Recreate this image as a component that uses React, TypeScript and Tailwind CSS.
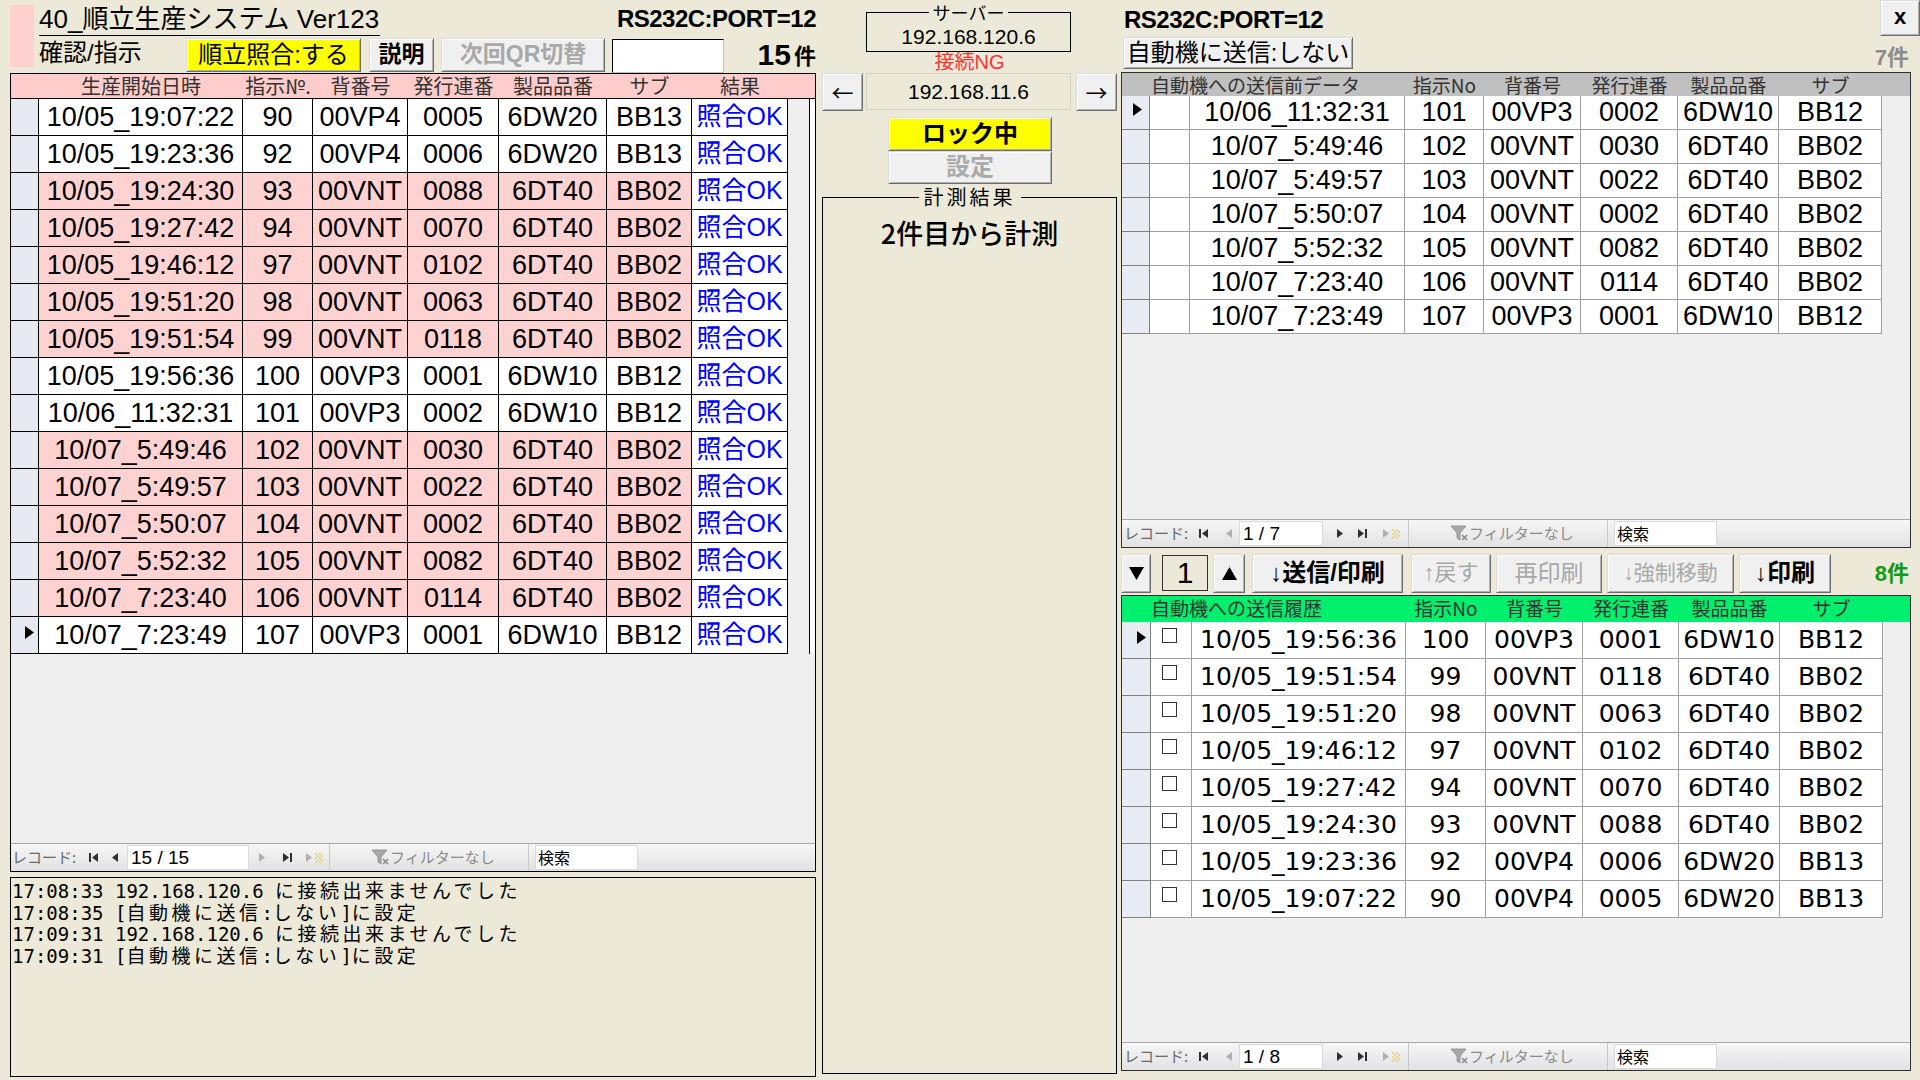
import React from "react";

const F = "font-['Liberation_Sans','Noto_Sans_CJK_JP',sans-serif]";
const FD = "font-['DejaVu_Sans','Noto_Sans_CJK_JP',sans-serif]";
const FM = "font-['DejaVu_Sans_Mono','Noto_Sans_CJK_JP',monospace]";
const FJ = "font-['Noto_Sans_CJK_JP',sans-serif]";

const BTN =
  "bg-[#f0f0f0] border border-t-[#dcdcdc] border-l-[#dcdcdc] border-r-[#6e6e6e] border-b-[#6e6e6e] shadow-[inset_1px_1px_0_#ffffff,inset_-1px_-1px_0_#b0b0b0]";

type R = [string, string, string, string, string, string];

const leftRows: { r: R; p: boolean }[] = [
  { r: ["10/05_19:07:22", "90", "00VP4", "0005", "6DW20", "BB13"], p: false },
  { r: ["10/05_19:23:36", "92", "00VP4", "0006", "6DW20", "BB13"], p: false },
  { r: ["10/05_19:24:30", "93", "00VNT", "0088", "6DT40", "BB02"], p: true },
  { r: ["10/05_19:27:42", "94", "00VNT", "0070", "6DT40", "BB02"], p: true },
  { r: ["10/05_19:46:12", "97", "00VNT", "0102", "6DT40", "BB02"], p: true },
  { r: ["10/05_19:51:20", "98", "00VNT", "0063", "6DT40", "BB02"], p: true },
  { r: ["10/05_19:51:54", "99", "00VNT", "0118", "6DT40", "BB02"], p: true },
  { r: ["10/05_19:56:36", "100", "00VP3", "0001", "6DW10", "BB12"], p: false },
  { r: ["10/06_11:32:31", "101", "00VP3", "0002", "6DW10", "BB12"], p: false },
  { r: ["10/07_5:49:46", "102", "00VNT", "0030", "6DT40", "BB02"], p: true },
  { r: ["10/07_5:49:57", "103", "00VNT", "0022", "6DT40", "BB02"], p: true },
  { r: ["10/07_5:50:07", "104", "00VNT", "0002", "6DT40", "BB02"], p: true },
  { r: ["10/07_5:52:32", "105", "00VNT", "0082", "6DT40", "BB02"], p: true },
  { r: ["10/07_7:23:40", "106", "00VNT", "0114", "6DT40", "BB02"], p: true },
  { r: ["10/07_7:23:49", "107", "00VP3", "0001", "6DW10", "BB12"], p: false },
];

const rightTop: R[] = [
  ["10/06_11:32:31", "101", "00VP3", "0002", "6DW10", "BB12"],
  ["10/07_5:49:46", "102", "00VNT", "0030", "6DT40", "BB02"],
  ["10/07_5:49:57", "103", "00VNT", "0022", "6DT40", "BB02"],
  ["10/07_5:50:07", "104", "00VNT", "0002", "6DT40", "BB02"],
  ["10/07_5:52:32", "105", "00VNT", "0082", "6DT40", "BB02"],
  ["10/07_7:23:40", "106", "00VNT", "0114", "6DT40", "BB02"],
  ["10/07_7:23:49", "107", "00VP3", "0001", "6DW10", "BB12"],
];

const rightBottom: R[] = [
  ["10/05_19:56:36", "100", "00VP3", "0001", "6DW10", "BB12"],
  ["10/05_19:51:54", "99", "00VNT", "0118", "6DT40", "BB02"],
  ["10/05_19:51:20", "98", "00VNT", "0063", "6DT40", "BB02"],
  ["10/05_19:46:12", "97", "00VNT", "0102", "6DT40", "BB02"],
  ["10/05_19:27:42", "94", "00VNT", "0070", "6DT40", "BB02"],
  ["10/05_19:24:30", "93", "00VNT", "0088", "6DT40", "BB02"],
  ["10/05_19:23:36", "92", "00VP4", "0006", "6DW20", "BB13"],
  ["10/05_19:07:22", "90", "00VP4", "0005", "6DW20", "BB13"],
];

const LW = ["w-[204px]", "w-[70px]", "w-[95px]", "w-[91px]", "w-[108px]", "w-[85px]", "w-[96px]"];
const TW = ["w-[215px]", "w-[79px]", "w-[97px]", "w-[97px]", "w-[101px]", "w-[103px]"];
const BW = ["w-[214px]", "w-[80px]", "w-[97px]", "w-[96px]", "w-[101px]", "w-[103px]"];

function Marker() {
  return (
    <svg width="9" height="13" viewBox="0 0 9 13">
      <polygon points="0,0 9,6.5 0,13" fill="#000" />
    </svg>
  );
}

function Ico({ k, c }: { k: "first" | "prev" | "next" | "last" | "new"; c: string }) {
  if (k === "first")
    return (
      <svg width="10" height="11" viewBox="0 0 10 11">
        <rect x="0" y="1" width="2" height="9" fill={c} />
        <polygon points="9,1 3,5.5 9,10" fill={c} />
      </svg>
    );
  if (k === "prev")
    return (
      <svg width="7" height="11" viewBox="0 0 7 11">
        <polygon points="6,1 0,5.5 6,10" fill={c} />
      </svg>
    );
  if (k === "next")
    return (
      <svg width="7" height="11" viewBox="0 0 7 11">
        <polygon points="1,1 7,5.5 1,10" fill={c} />
      </svg>
    );
  if (k === "last")
    return (
      <svg width="10" height="11" viewBox="0 0 10 11">
        <polygon points="0,1 6,5.5 0,10" fill={c} />
        <rect x="7" y="1" width="2" height="9" fill={c} />
      </svg>
    );
  return (
    <svg width="20" height="11" viewBox="0 0 20 11">
      <polygon points="1,1 7,5.5 1,10" fill={c} />
      <g fill="#e6d48a">
        <rect x="10" y="1" width="2" height="2" />
        <rect x="14" y="1" width="2" height="2" />
        <rect x="12" y="3" width="2" height="2" />
        <rect x="16" y="3" width="2" height="2" />
        <rect x="10" y="5" width="2" height="2" />
        <rect x="14" y="5" width="2" height="2" />
        <rect x="12" y="7" width="2" height="2" />
        <rect x="16" y="7" width="2" height="2" />
        <rect x="10" y="9" width="2" height="2" />
        <rect x="14" y="9" width="2" height="2" />
      </g>
    </svg>
  );
}

function Funnel() {
  return (
    <svg width="19" height="17" viewBox="0 0 19 17">
      <polygon points="1,1 16,1 10,8 10,15 7,13 7,8" fill="#a8a8a8" stroke="#8a8a8a" strokeWidth="0.8" />
      <path d="M12 10 L17 15 M17 10 L12 15" stroke="#8a8a8a" strokeWidth="1.6" />
    </svg>
  );
}

function NavBar({ value, right }: { value: string; right?: boolean }) {
  const act = "#303030";
  const dis = "#b0b0b0";
  return (
    <div className="h-[28px] shrink-0 border-t border-[#a8a8a8] bg-linear-to-b from-[#f6f6f6] to-[#e2e2e2] flex items-center text-[15px] text-[#6a6a6a] whitespace-nowrap">
      <div className={`${right ? "w-[66px] pl-[2px]" : "w-[67px] pl-[1px]"} shrink-0 overflow-visible ${FJ}`}>レコード:</div>
      <div className="ml-[11px] flex items-center shrink-0">
        <Ico k="first" c={act} />
      </div>
      <div className={`${right ? "ml-[17px]" : "ml-[13px]"} flex items-center shrink-0`}>
        <Ico k="prev" c={right ? dis : act} />
      </div>
      <div
        className={`${right ? "ml-[6px] w-[84px]" : "ml-[8px] w-[122px]"} shrink-0 h-[25px] bg-white border border-[#dadada] text-[19px] leading-[24px] text-black pl-[3px] ${F}`}
      >
        {value}
      </div>
      <div className={`${right ? "ml-[13px]" : "ml-[9px]"} flex items-center shrink-0`}>
        <Ico k="next" c={right ? act : dis} />
      </div>
      <div className={`${right ? "ml-[15px]" : "ml-[18px]"} flex items-center shrink-0`}>
        <Ico k="last" c={act} />
      </div>
      <div className={`${right ? "ml-[14px]" : "ml-[12px]"} flex items-center shrink-0`}>
        <Ico k="new" c={dis} />
      </div>
      <div className={`${right ? "ml-[6px]" : "ml-[4px]"} w-px h-[27px] bg-[#c8c8c8] shrink-0`} />
      <div className="ml-[41px] flex items-center shrink-0">
        <Funnel />
      </div>
      <div className={`w-[100px] shrink-0 text-[15px] text-[#8a8a8a] ${FJ}`}>フィルターなし</div>
      <div className="ml-[38px] w-px h-[27px] bg-[#c8c8c8] shrink-0" />
      <div className={`ml-[6px] w-[103px] shrink-0 h-[25px] bg-white border border-[#dadada] text-[16px] leading-[23px] text-black pl-[2px] ${FJ}`}>
        検索
      </div>
    </div>
  );
}

function LeftTable() {
  const heads = ["生産開始日時", "指示№.", "背番号", "発行連番", "製品品番", "サブ", "結果"];
  return (
    <div className="h-[799px] border border-black flex flex-col bg-[#efefef]">
      <div className={`h-[24px] shrink-0 flex bg-[#ffcccc] text-[20px] leading-[24px] text-[#333] ${FJ}`}>
        <div className="w-[28px]" />
        {heads.map((h, i) => (
          <div key={i} className={`${LW[i]} text-center`}>
            {h}
          </div>
        ))}
      </div>
      <div className="flex border-t border-black">
        <div className="flex flex-col">
          {leftRows.map((row, ri) => (
            <div key={ri} className="h-[37px] flex border-b border-black text-[27px]">
              <div className="w-[28px] h-full bg-[#e6e9ef] border-r border-black pl-[14px] pt-[9px]">
                {ri === 14 && <Marker />}
              </div>
              {row.r.map((c, ci) => (
                <div
                  key={ci}
                  className={`${LW[ci]} h-full border-r border-black flex items-center justify-center whitespace-nowrap ${
                    row.p ? "bg-[#ffd2d2]" : "bg-white"
                  }`}
                >
                  {c}
                </div>
              ))}
              <div className={`${LW[6]} h-full border-r border-black bg-white flex items-center justify-center text-[25px] text-[#0000ff]`}>
                照合OK
              </div>
            </div>
          ))}
        </div>
        <div className="flex-1" />
        <div className="w-[6px] h-[555px] bg-white border-l border-black" />
      </div>
      <div className="mt-auto">
        <NavBar value="15 / 15" />
      </div>
    </div>
  );
}

function LogLine({ t, parts }: { t: string; parts: [string, boolean][] }) {
  return (
    <div className={`h-[21.7px] leading-[21.7px] whitespace-pre text-[19px] ${FM}`}>
      {t}
      {parts.map(([s, jp], i) =>
        jp ? (
          <span key={i} className="tracking-[3.5px]">
            {s}
          </span>
        ) : (
          <span key={i}>{s}</span>
        )
      )}
    </div>
  );
}

function Left() {
  return (
    <div className="w-[806px] h-full flex flex-col">
      <div className="h-[73px] flex shrink-0">
        <div className="w-[24px] h-[62px] mt-[5px] bg-[#ffd0d0]" />
        <div className="ml-[5px] flex-1 flex flex-col">
          <div className="h-[37px] flex items-start justify-between">
            <div className="mt-[4px] text-[26px] leading-[31px] border-b border-black pr-[1px]">
              40_順立生産システム Ver123
            </div>
            <div className="mt-[6px] text-[24px] leading-[26px] font-bold tracking-[-0.5px]">RS232C:PORT=12</div>
          </div>
          <div className="h-[36px] flex items-start">
            <div className="w-[147px] text-[24px] leading-[30px] mt-[1px]">確認/指示</div>
            <div className={`${BTN} bg-[#ffff00] w-[175px] h-[34px] mt-[1px] text-[24px] leading-[31px] text-center`}>
              順立照合:する
            </div>
            <div className={`${BTN} ml-[8px] w-[65px] h-[34px] mt-[1px] text-[23px] leading-[31px] text-center font-bold`}>
              説明
            </div>
            <div className={`${BTN} ml-[7px] w-[164px] h-[34px] mt-[1px] text-[23px] leading-[31px] text-center font-bold text-[#a8a8a8]`}>
              次回QR切替
            </div>
            <div className="ml-[7px] w-[112px] h-[34px] mt-[2px] bg-white border border-black border-r-[#c0c0c0] border-b-[#c0c0c0]" />
            <div className="flex-1 flex justify-end items-end h-[34px] font-bold">
              <span className="text-[30px] leading-[32px]">15</span>
              <span className="text-[22px] leading-[28px] ml-[3px]">件</span>
            </div>
          </div>
        </div>
      </div>
      <LeftTable />
      <div className="mt-[5px] h-[200px] border border-black bg-[#ece9d8] pl-[1px] pt-[3px]">
        <LogLine t="17:08:33 192.168.120.6 " parts={[["に接続出来ませんでした", true]]} />
        <LogLine
          t="17:08:35 ["
          parts={[
            ["自動機に送信", true],
            [":", false],
            ["しない", true],
            ["]", false],
            ["に設定", true],
          ]}
        />
        <LogLine t="17:09:31 192.168.120.6 " parts={[["に接続出来ませんでした", true]]} />
        <LogLine
          t="17:09:31 ["
          parts={[
            ["自動機に送信", true],
            [":", false],
            ["しない", true],
            ["]", false],
            ["に設定", true],
          ]}
        />
      </div>
    </div>
  );
}

function Middle() {
  return (
    <div className="ml-[6px] w-[295px] h-full flex flex-col">
      <div className="relative mt-[12px] ml-[44px] w-[205px] h-[40px] border border-black">
        <div className={`absolute left-1/2 -translate-x-1/2 -top-[10px] bg-[#ece9d8] px-[4px] text-[18px] leading-[18px] whitespace-nowrap ${FJ}`}>
          サーバー
        </div>
        <div className="text-center text-[21px] leading-[24px] pt-[12px]">192.168.120.6</div>
      </div>
      <div className="h-[21px] text-center text-[20px] leading-[21px] text-[#ff3333]">接続NG</div>
      <div className="h-[38px] flex">
        <div className={`${BTN} w-[41px] h-full text-[22px] leading-[34px] text-center ${FJ}`}>←</div>
        <div className="ml-[3px] w-[205px] h-[37px] border border-[#d6d2c0] text-center text-[21px] leading-[35px]">
          192.168.11.6
        </div>
        <div className={`${BTN} ml-[5px] w-[41px] h-full text-[22px] leading-[34px] text-center ${FJ}`}>→</div>
      </div>
      <div className={`${BTN} mt-[6px] ml-[66px] w-[164px] h-[34px] bg-[#ffff00] text-[24px] leading-[31px] text-center font-bold`}>
        ロック中
      </div>
      <div className={`${BTN} ml-[66px] w-[164px] h-[33px] text-[24px] leading-[30px] text-center font-bold text-[#aaaaaa]`}>
        設定
      </div>
      <div className="relative mt-[13px] h-[877px] border border-black">
        <div className={`absolute left-1/2 -translate-x-1/2 -top-[13px] bg-[#ece9d8] px-[5px] text-[20px] leading-[24px] tracking-[3px] whitespace-nowrap ${FJ}`}>
          計測結果
        </div>
        <div className={`text-center text-[27px] leading-[32px] pt-[19px] font-medium ${FJ}`}>2件目から計測</div>
      </div>
    </div>
  );
}

function TopTable() {
  return (
    <div className="h-[476px] border border-[#303030] flex flex-col bg-[#efefef]">
      <div className={`h-[23px] shrink-0 bg-[#c0c0c0] flex text-[19px] leading-[23px] text-[#333] ${FJ}`}>
        <div className="w-[283px] pl-[29px]">自動機への送信前データ</div>
        <div className="w-[79px] text-center">指示No</div>
        <div className="w-[97px] text-center">背番号</div>
        <div className="w-[97px] text-center">発行連番</div>
        <div className="w-[101px] text-center">製品品番</div>
        <div className="w-[103px] text-center">サブ</div>
      </div>
      <div className="flex flex-col">
        {rightTop.map((row, ri) => (
          <div key={ri} className="h-[34px] flex text-[27px]">
            <div className="w-[28px] h-full bg-[#e8ecf2] border-r border-b border-[#808080] pl-[11px] pt-[7px]">
              {ri === 0 && <Marker />}
            </div>
            <div className="w-[40px] h-full bg-white border-r border-b border-[#a0a0a0]" />
            {row.map((c, ci) => (
              <div key={ci} className={`${TW[ci]} h-full bg-white border-r border-b border-[#a0a0a0] flex items-center justify-center whitespace-nowrap`}>
                {c}
              </div>
            ))}
          </div>
        ))}
      </div>
      <div className="mt-auto">
        <NavBar value="1 / 7" right />
      </div>
    </div>
  );
}

function BottomTable() {
  return (
    <div className="h-[476px] border border-[#303030] flex flex-col bg-[#efefef]">
      <div className={`h-[26px] shrink-0 bg-[#00f06e] flex text-[19px] leading-[24px] text-[#333] ${FJ}`}>
        <div className="w-[284px] pl-[29px]">自動機への送信履歴</div>
        <div className="w-[80px] text-center">指示No</div>
        <div className="w-[97px] text-center">背番号</div>
        <div className="w-[96px] text-center">発行連番</div>
        <div className="w-[101px] text-center">製品品番</div>
        <div className="w-[103px] text-center">サブ</div>
      </div>
      <div className={`flex flex-col ${FD}`}>
        {rightBottom.map((row, ri) => (
          <div key={ri} className="h-[37px] flex text-[25px]">
            <div className="w-[29px] h-full bg-[#e8ecf2] border-r border-b border-[#808080] pl-[15px] pt-[9px]">
              {ri === 0 && <Marker />}
            </div>
            <div className="w-[41px] h-full bg-white border-r border-b border-[#a0a0a0] pl-[11px] pt-[6px]">
              <div className="w-[15px] h-[15px] border border-[#333] bg-white" />
            </div>
            {row.map((c, ci) => (
              <div key={ci} className={`${BW[ci]} h-full bg-white border-r border-b border-[#a0a0a0] flex items-center justify-center whitespace-nowrap`}>
                {c}
              </div>
            ))}
          </div>
        ))}
      </div>
      <div className="mt-auto">
        <NavBar value="1 / 8" right />
      </div>
    </div>
  );
}

function Right() {
  return (
    <div className="ml-[4px] w-[790px] h-full flex flex-col">
      <div className="h-[37px] shrink-0 pl-[3px]">
        <div className="mt-[7px] text-[24px] leading-[26px] font-bold tracking-[-0.5px]">RS232C:PORT=12</div>
      </div>
      <div className="h-[35px] shrink-0 flex items-start justify-between">
        <div className={`${BTN} ml-[2px] w-[230px] h-[32px] text-[24px] leading-[29px] text-center`}>自動機に送信:しない</div>
        <div className="mt-[8px] mr-[2px] text-[22px] leading-[26px] font-bold text-[#8c8c8c]">7件</div>
      </div>
      <TopTable />
      <div className="mt-[5px] h-[40px] shrink-0 flex items-center">
        <div className={`${BTN} w-[30px] h-[39px] flex items-center justify-center`}>
          <svg width="15" height="13" viewBox="0 0 15 13">
            <polygon points="0,0 15,0 7.5,13" fill="#000" />
          </svg>
        </div>
        <div className="ml-[11px] w-[46px] h-[36px] border border-[#303030] bg-[#ece9d8] text-center text-[30px] leading-[34px]">
          1
        </div>
        <div className={`${BTN} ml-[5px] w-[32px] h-[39px] flex items-center justify-center`}>
          <svg width="15" height="13" viewBox="0 0 15 13">
            <polygon points="0,13 15,13 7.5,0" fill="#000" />
          </svg>
        </div>
        <div className={`${BTN} ml-[7px] w-[151px] h-[39px] text-[24px] leading-[36px] text-center font-bold`}>↓送信/印刷</div>
        <div className={`${BTN} ml-[8px] w-[80px] h-[39px] text-[22px] leading-[36px] text-center text-[#a8a8a8]`}>↑戻す</div>
        <div className={`${BTN} ml-[5px] w-[106px] h-[39px] text-[23px] leading-[36px] text-center text-[#a8a8a8]`}>再印刷</div>
        <div className={`${BTN} ml-[5px] w-[127px] h-[39px] text-[21px] leading-[36px] text-center text-[#a8a8a8]`}>↓強制移動</div>
        <div className={`${BTN} ml-[5px] w-[92px] h-[39px] text-[24px] leading-[36px] text-center font-bold`}>↓印刷</div>
        <div className="flex-1 text-right pr-[2px] text-[22px] font-bold text-[#129a12]">8件</div>
      </div>
      <div className="mt-[2px]">
        <BottomTable />
      </div>
    </div>
  );
}

export default function App() {
  return (
    <div className={`w-[1920px] h-[1080px] bg-[#ece9d8] flex pl-[10px] relative overflow-hidden text-black ${F}`}>
      <Left />
      <Middle />
      <Right />
      <div className={`${BTN} absolute top-0 right-0 w-[40px] h-[36px] text-[22px] leading-[32px] text-center font-bold`}>x</div>
    </div>
  );
}
